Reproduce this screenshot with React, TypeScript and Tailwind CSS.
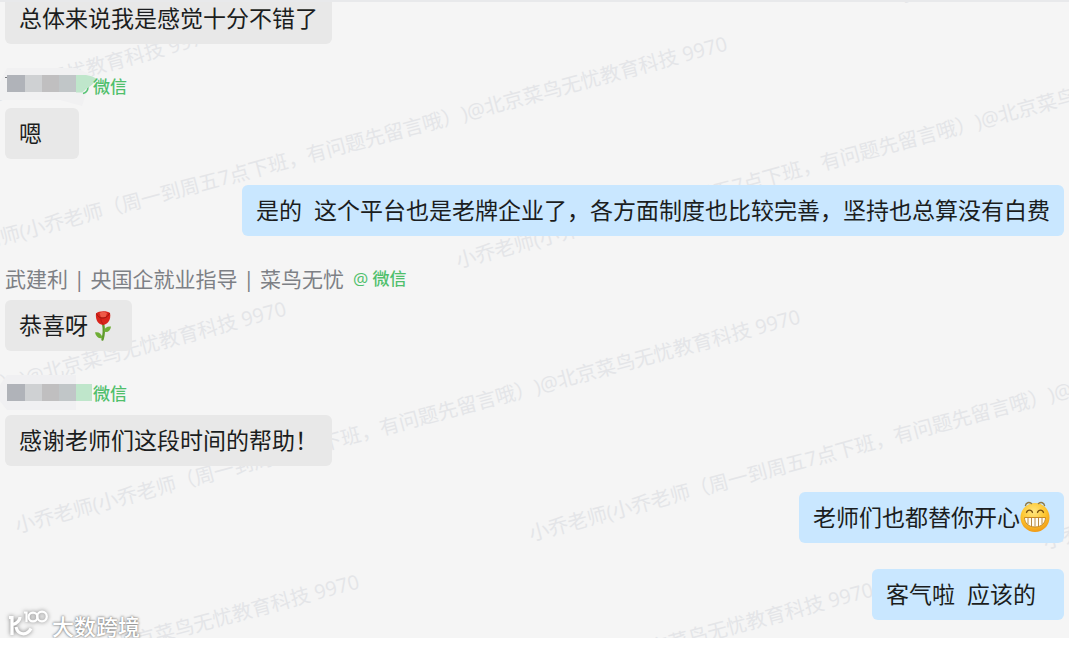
import type { ReactNode } from 'react';
import clsx from 'clsx';

const WATERMARK = '小乔老师(小乔老师（周一到周五7点下班，有问题先留言哦）)@北京菜鸟无忧教育科技 9970';

// column and row of every watermark line on the slanted grid
const WATERMARK_CELLS = [
  [2, -2],
  [-2, -1],
  [-1, -1],
  [0, -1],
  [1, -1],
  [-1, 0],
  [0, 0],
  [1, 0],
  [2, 0],
  [-1, 1],
  [0, 1],
];

function Watermark() {
  return (
    <div aria-hidden="true" className="absolute inset-0 overflow-hidden select-none pointer-events-none">
      {WATERMARK_CELLS.map(([col, row]) => (
        <span
          key={`${col}:${row}`}
          className="absolute origin-bottom-left -rotate-[15deg] whitespace-nowrap text-[20px] leading-[20px] text-[#e4e5e8] [text-spacing-trim:space-all]"
          style={{ left: 18 + col * 514 + row * 73, top: 516 + col * 8 + row * 273 }}
        >
          {WATERMARK}
        </span>
      ))}
    </div>
  );
}

function Rose() {
  return (
    <svg viewBox="0 0 30 30" className="w-[30px] h-[30px]" role="img" aria-label="玫瑰">
      <path d="M15 12 C16 17 16.500 22 14.500 28.500" fill="none" stroke="#5f9a2c" strokeWidth="2.400" strokeLinecap="round" />
      <path d="M15.500 20.500 C16.500 16.500 19.500 15 23 15.500 C22.500 20 19.500 22 15.500 20.500Z" fill="#6fae35" />
      <path d="M14.500 27 C13.500 22.800 11 20.800 7 21.500 C8 26 11 28 14.500 27Z" fill="#6fae35" />
      <path d="M8 2.500 C7.500 7 8.500 13 15 14 C21.500 13 23 7 22 2 C19.500 -0.500 10.500 -0.500 8 2.500Z" fill="#d9241b" />
      <path d="M11.500 2 C13 0.500 17.500 0.500 19 2 L17.500 6.500 L13 6.500Z" fill="#ee5a48" />
      <path d="M8.500 2.500 C10 6 12 7 15 7 C18 7 20.500 5 21.500 2" fill="none" stroke="#9f150f" strokeWidth="1" />
      <path d="M13 6.500 C12.500 9 13.500 12 15.500 13.300" fill="none" stroke="#b51a13" strokeWidth="1" />
    </svg>
  );
}

function Grin() {
  return (
    <svg viewBox="0 0 30 32" className="w-[30px] h-[32px] -translate-y-px" role="img" aria-label="呲牙">
      <defs>
        <radialGradient id="grin-face" cx="0.45" cy="0.3" r="0.75">
          <stop offset="0" stopColor="#ffe680" />
          <stop offset="0.55" stopColor="#fdc52f" />
          <stop offset="1" stopColor="#ee9311" />
        </radialGradient>
      </defs>
      <circle cx="15" cy="16.500" r="14.500" fill="url(#grin-face)" />
      <path d="M5.500 4.500 C6 1.500 9 0.800 11.500 2.500 M18.500 2.500 C21 0.800 24 1.500 24.500 4.500" fill="none" stroke="#8f7a45" strokeWidth="1.500" strokeLinecap="round" />
      <path d="M6.500 11.500 C7.500 8.300 11.500 8.300 12.500 11.500 M17.500 11.500 C18.500 8.300 22.500 8.300 23.500 11.500" fill="none" stroke="#7a5210" strokeWidth="1.300" strokeLinecap="round" />
      <path d="M4.500 16.500 H25.500 C25.500 22 21.500 26 15 26 C8.500 26 4.500 22 4.500 16.500Z" fill="#fffdf5" stroke="#c98a24" strokeWidth="1" />
      <path d="M8 17 V23.500 M11.500 17 V25 M15 17 V25.500 M18.500 17 V25 M22 17 V23.500" stroke="#b98a42" strokeWidth="1" />
    </svg>
  );
}

// pixelated block that hides a contact's name
function Mosaic({ torn = false }: { torn?: boolean }) {
  const y = torn ? 5 : 7;
  return (
    <svg viewBox="0 0 92 34" className="w-[92px] h-[34px] -ml-[5px] overflow-visible" aria-hidden="true">
      {torn ? (
        <>
          <path d="M7 -2 H76 L92 5 L82 36 L60 30 H0 V12Z" fill="#f1f1f2" />
          <path d="M5 7.500 H8" stroke="#77797d" strokeWidth="1" />
          <path d="M83 23.500 Q88 22 88 17" fill="none" stroke="#58c475" strokeWidth="1.500" />
          <path d="M76 5 H86 Q93 6 97 9 Q93 15 86 19 L82 22.500 H76Z" fill="#bfe6cb" />
        </>
      ) : (
        <>
          <path d="M7 -2 H76 V33 H7 L0 24 V8Z" fill="#f0f0f2" />
          <path d="M76 7 H92 V24 H76Z" fill="#bfe6cb" />
        </>
      )}
      <rect x="7" y={y} width="18" height="17" fill="#b0b3b9" />
      <rect x="25" y={y} width="17" height="17" fill="#cfd1d3" />
      <rect x="42" y={y} width="17" height="17" fill="#c0bfc0" />
      <rect x="59" y={y} width="17" height="17" fill="#c1c6c8" />
    </svg>
  );
}

function Sender({ children }: { children: ReactNode }) {
  return (
    <div className="flex items-center h-[34px] text-[21px] leading-[34px] text-[#7d8085] whitespace-nowrap">
      {children}
    </div>
  );
}

function Source({ at = false }: { at?: boolean }) {
  return <span className="text-[17px] font-medium text-[#4fbf6b] ml-px">{at ? '@ 微信' : '微信'}</span>;
}

interface MessageProps {
  mine?: boolean;
  sender?: ReactNode;
  className?: string;
  children: ReactNode;
}

function Message({ mine, sender, className, children }: MessageProps) {
  return (
    <li className={clsx('flex flex-col gap-1', mine ? 'items-end' : 'items-start')}>
      {sender && <Sender>{sender}</Sender>}
      <div
        className={clsx(
          'flex items-center h-[51px] px-3.5 rounded-md text-[23px] leading-[23px] text-[#1b1d20] whitespace-pre',
          mine ? 'bg-[#c9e7ff]' : 'bg-[#e8e8e8]',
          className
        )}
      >
        {children}
      </div>
    </li>
  );
}

function Brand() {
  return (
    <div className="absolute left-2 bottom-0 flex items-end gap-1 text-white">
      <svg
        viewBox="0 0 40 30"
        className="w-[40px] h-[30px] overflow-visible drop-shadow-[0_0_2px_#777777]"
        fill="none"
        stroke="#ffffff"
        strokeWidth="3.200"
        aria-hidden="true"
      >
        <path d="M1 9.500 H4 V27" />
        <path d="M12 9 C12 12 9 15.500 5 16.500" />
        <path d="M8 19 C10 27.500 19 28 23 20.500" />
        <path d="M16 4.500 H18.500 V14" strokeWidth="2.200" />
        <circle cx="25" cy="9" r="4.400" strokeWidth="2.200" />
        <circle cx="34" cy="8.500" r="4.800" strokeWidth="2.200" />
      </svg>
      <span className="text-[22px] leading-[24px] font-medium [text-shadow:0_0_2px_#777777,0_0_3px_#999999]">大数跨境</span>
    </div>
  );
}

export default function App() {
  return (
    <main className="pr-[11px] bg-white font-['Open_Sans','Noto_Sans_CJK_SC',sans-serif]">
      <section className="relative overflow-hidden bg-[#f5f5f5]">
        <Watermark />
        <ul className="relative flex flex-col gap-[26px] -mt-[7px] pl-[5px] pr-[5px] pb-[18px]">
          <Message>总体来说我是感觉十分不错了</Message>
          <Message
            className="min-w-[74px]"
            sender={
              <>
                <Mosaic torn />
                <Source />
              </>
            }
          >
            嗯
          </Message>
          <Message mine>是的  这个平台也是老牌企业了，各方面制度也比较完善，坚持也总算没有白费</Message>
          <Message
            sender={
              <>
                <span className="mr-2">武建利 | 央国企就业指导 | 菜鸟无忧</span>
                <Source at />
              </>
            }
          >
            恭喜呀
            <Rose />
          </Message>
          <Message
            sender={
              <>
                <Mosaic />
                <Source />
              </>
            }
          >
            感谢老师们这段时间的帮助！
          </Message>
          <Message mine>
            老师们也都替你开心
            <Grin />
          </Message>
          <Message mine className="pr-7">
            客气啦  应该的
          </Message>
        </ul>
        <div className="absolute inset-x-0 top-0 h-0.5 bg-[#e8e9eb]" />
        <Brand />
      </section>
    </main>
  );
}
